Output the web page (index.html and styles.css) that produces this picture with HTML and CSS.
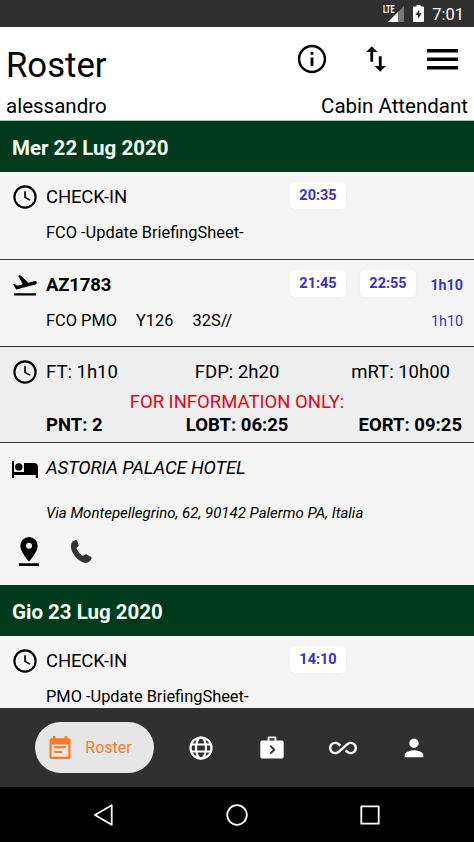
FILE: index.html
```html
<!DOCTYPE html>
<html lang="it">
<head>
	<meta charset="UTF-8">
	<title>Roster</title>
	<link rel="stylesheet" href="styles.css">
</head>
<body>
	<svg class="defs">
		<symbol id="clock" viewBox="0 0 24 24">
			<circle cx="12" cy="12" r="9.1" fill="none" stroke="currentColor" stroke-width="1.8"/>
			<path d="M12 7v5.3l4.3 2.4" fill="none" stroke="currentColor" stroke-width="1.4"/>
		</symbol>
	</svg>
	<div class="status">
		<svg class="signal" width="22" height="20" viewBox="0 0 22 20">
			<path d="M21 3v16H5z" fill="#777"/>
			<path d="M15 9v10H5z" fill="#fff"/>
			<text class="lte" x="0" y="10" textLength="11.500" lengthAdjust="spacingAndGlyphs">LTE</text>
		</svg>
		<svg class="battery" width="11" height="17" viewBox="0 0 11 17">
			<path d="M3.5 0h4v1.6H10q1 0 1 1V16q0 1-1 1H1q-1 0-1-1V2.600q0-1 1-1h2.500z" fill="#fff"/>
			<path d="M6.300 4.500L2.300 10h2.600v4l4-5.700H6.300z" fill="#303030"/>
		</svg>
		<span class="time">7:01</span>
	</div>
	<div class="header">
		<div class="top">
			<h1>Roster</h1>
			<svg class="info" width="34" height="34" viewBox="0 0 24 24"><path d="M11 7h2v2h-2zm0 4h2v6h-2zm1-9C6.480 2 2 6.480 2 12s4.480 10 10 10 10-4.480 10-10S17.520 2 12 2zm0 18.300c-4.580 0-8.300-3.720-8.300-8.300S7.420 3.700 12 3.700s8.300 3.720 8.300 8.300-3.720 8.300-8.300 8.300z"/></svg>
			<svg class="sort" width="34" height="34" viewBox="0 0 24 24"><path d="M16 17.010V10h-2v7.010h-3L15 21l4-3.990h-3zM9 3L5 6.990h3V14h2V6.990h3L9 3z"/></svg>
			<svg class="menu" width="31" height="21" viewBox="0 0 31 21"><path d="M0 0h31v3.400H0zM0 8.500h31v3.400H0zM0 17h31v3.400H0z"/></svg>
		</div>
		<div class="user">
			<span class="name">alessandro</span>
			<span class="role">Cabin Attendant</span>
		</div>
	</div>
	<div class="list">
		<h2 class="day">Mer 22 Lug 2020</h2>
		<div class="row first">
			<div class="line">
				<svg class="icon"><use href="#clock"/></svg>
				<span class="title">CHECK-IN</span>
				<span class="pill">20:35</span>
			</div>
			<div class="sub">FCO -Update BriefingSheet-</div>
		</div>
		<div class="row flight">
			<div class="line">
				<svg class="icon" viewBox="0 0 24 24"><path d="M2.500 19h19v2h-19zm19.570-9.360c-.21-.8-1.040-1.280-1.840-1.060L14.920 10l-6.900-6.430-1.930.51 4.140 7.170-4.970 1.330-1.970-1.540-1.450.39 2.590 4.490c5.890-1.570 10.680-2.860 16.570-4.430.81-.23 1.280-1.050 1.070-1.850z"/></svg>
				<span class="title bold">AZ1783</span>
				<span class="pill">21:45</span>
				<span class="pill">22:55</span>
				<span class="dur bold">1h10</span>
			</div>
			<div class="sub">
				<span class="route">FCO PMO</span>
				<span class="code">Y126</span>
				<span class="plane">32S//</span>
				<span class="dur low">1h10</span>
			</div>
		</div>
		<div class="row summary">
			<div class="line">
				<svg class="icon"><use href="#clock"/></svg>
				<div class="cols">
					<span>FT: 1h10</span>
					<span class="fdp">FDP: 2h20</span>
					<span class="mrt">mRT: 10h00</span>
				</div>
			</div>
			<div class="notice">FOR INFORMATION ONLY:</div>
			<div class="cols bold">
				<span>PNT: 2</span>
				<span class="lobt">LOBT: 06:25</span>
				<span>EORT: 09:25</span>
			</div>
		</div>
		<div class="row hotel">
			<div class="line">
				<svg class="icon bed" viewBox="0 0 26 18"><path d="M0 0h2v11h10V2h10q4 0 4 4v11h-2.200v-3H2v3H0z"/><circle cx="6.800" cy="6" r="3.700"/></svg>
				<span class="title">ASTORIA PALACE HOTEL</span>
			</div>
			<div class="address">Via Montepellegrino, 62, 90142 Palermo PA, Italia</div>
			<div class="actions">
				<svg width="20" height="29" viewBox="0 0 20 29"><path fill-rule="evenodd" d="M10 0a8.700 8.700 0 0 0-8.700 8.700C1.300 15 10 24.500 10 24.500S18.700 15 18.700 8.700A8.700 8.700 0 0 0 10 0zm0 5.700a3 3 0 1 1 0 6 3 3 0 0 1 0-6zM0 26.200h20V29H0z"/></svg>
				<svg class="phone" width="22" height="24" viewBox="0 0 22 24"><path d="M3 1.200L5.600.1q1-.3 1.500.7l1.600 4.100q.3.900-.5 1.500L6.300 8.100q2 5 6.300 8l2.700-1.600q.7-.6 1.500-.1l4.300 2.700q.9.700.3 1.700-1.800 3.800-5.600 4.100c-3.500.1-7.900-3-11.100-7.100C.9 11.200-.7 4.200 3 1.200z"/></svg>
			</div>
		</div>
		<h2 class="day">Gio 23 Lug 2020</h2>
		<div class="row last">
			<div class="line">
				<svg class="icon"><use href="#clock"/></svg>
				<span class="title">CHECK-IN</span>
				<span class="pill">14:10</span>
			</div>
			<div class="sub">PMO -Update BriefingSheet-</div>
		</div>
	</div>
	<div class="tabs">
		<div class="tab on">
			<svg width="22" height="24" viewBox="0 0 22 24"><path fill-rule="evenodd" d="M4 0h2.400v2.300h9.200V0H18v2.300h1.700q1.800 0 1.800 1.800v17q0 1.900-1.800 1.900H2.300Q.5 23 .5 21.100v-17q0-1.800 1.800-1.800H4zM2.700 8.500v12.300h16.600V8.500zM5.200 10.300h11.600v2H5.200zM5.200 15h8v2h-8z"/></svg>
			<span>Roster</span>
		</div>
		<div class="tab">
			<svg width="24" height="24" viewBox="0 0 24 24" fill="none" stroke="#fff" stroke-width="2.200"><circle cx="12" cy="12" r="10.500"/><ellipse cx="12" cy="12" rx="5" ry="10.500"/><path d="M2.500 8.500h19M2.500 15.500h19"/></svg>
		</div>
		<div class="tab">
			<svg width="24" height="23" viewBox="0 0 24 23"><path fill-rule="evenodd" d="M7.500 4.500V2.200Q7.500.5 9 .5h6q1.500 0 1.500 1.700v2.300H22q1.700 0 1.700 1.700v14.500q0 1.700-1.700 1.700H2Q.3 22.400.3 20.700V6.200Q.3 4.500 2 4.500zm2-2.200v2.200h5V2.300z"/><path d="M10.200 9.700l4 4-4 4" fill="none" stroke="#303030" stroke-width="1.900"/></svg>
		</div>
		<div class="tab">
			<svg width="28" height="28" viewBox="0 0 24 24"><path d="M18.600 6.620c-1.440 0-2.800.56-3.770 1.530L7.800 14.390c-.64.640-1.490.990-2.400.990-1.870 0-3.390-1.510-3.390-3.380S3.530 8.620 5.400 8.620c.91 0 1.760.35 2.440 1.030l1.130 1 1.510-1.340L9.220 8.200C8.200 7.180 6.840 6.620 5.400 6.620 2.420 6.620 0 9.040 0 12s2.420 5.380 5.400 5.380c1.440 0 2.800-.56 3.770-1.530l7.030-6.240c.64-.64 1.490-.99 2.400-.99 1.870 0 3.390 1.510 3.390 3.380s-1.520 3.380-3.390 3.380c-.9 0-1.760-.35-2.440-1.030l-1.140-1.010-1.510 1.340 1.270 1.120c1.020 1.010 2.370 1.570 3.820 1.570 2.980 0 5.400-2.410 5.400-5.380s-2.420-5.370-5.400-5.370z"/></svg>
		</div>
		<div class="tab">
			<svg width="28" height="28" viewBox="0 0 24 24"><path d="M12 12c2.210 0 4-1.790 4-4s-1.790-4-4-4-4 1.790-4 4 1.790 4 4 4zm0 2c-2.670 0-8 1.340-8 4v2h16v-2c0-2.660-5.330-4-8-4z"/></svg>
		</div>
	</div>
	<div class="keys">
		<svg width="22" height="22" viewBox="0 0 22 22"><path d="M18.700 1.200v19.600L2 11z"/></svg>
		<svg width="22" height="22" viewBox="0 0 22 22"><circle cx="11" cy="11" r="9.800"/></svg>
		<svg width="22" height="22" viewBox="0 0 22 22"><path d="M2.300 2.300h17.400v17.400H2.300z"/></svg>
	</div>
</body>
</html>
```

FILE: styles.css
```css
*{
	margin: 0;
	padding: 0;
	box-sizing: border-box;
}
body {
	width: 474px;
	height: 842px;
	overflow: hidden;
	font-family: Roboto, sans-serif;
	color: #000;
	background: #fff;
}
svg {
	display: block;
	flex: none;
}
span {
	white-space: nowrap;
}
.defs {
	display: none;
}
.bold {
	font-weight: bold;
}
.status {
	height: 27px;
	background: #303030;
	display: flex;
	align-items: center;
	justify-content: flex-end;
	padding: 2px 10px 0 0;
	color: #fff;
}
.signal {
	margin: -4px 8px 0 0;
}
.lte {
	font-size: 10px;
	font-weight: bold;
	fill: #fff;
}
.battery {
	margin: -2px 8px 0 0;
}
.time {
	font-size: 16.5px;
}
.header {
	height: 94px;
	border-bottom: 1px solid #b5c3b5;
}
.top {
	height: 64px;
	display: flex;
	align-items: center;
	padding: 0 16px 0 6px;
}
h1 {
	font-size: 34.700px;
	font-weight: normal;
	line-height: 40px;
	margin: 11px auto 0 0;
}
.sort {
	margin: 0 34px 0 30px;
}
.user {
	display: flex;
	justify-content: space-between;
	padding: 3px 6px 0;
	font-size: 20.500px;
	line-height: 25px;
}
.list {
	height: 587px;
	overflow: hidden;
}
.day {
	height: 51px;
	line-height: 54px;
	padding-left: 12px;
	background: #003a1e;
	color: #effff2;
	font-size: 20.500px;
}
.row {
	height: 87px;
	padding: 10px 12px 0 11px;
	background: #f5f5f5;
	border-bottom: 1px solid #333;
	font-size: 18.500px;
}
.row.first {
	height: 88px;
}
.line {
	height: 30px;
	display: flex;
	align-items: center;
}
.icon {
	width: 28px;
	height: 28px;
	margin-right: 7px;
}
.line .title {
	width: 244px;
	letter-spacing: -0.150px;
}
.hotel .title {
	font-style: italic;
}
.pill {
	width: 56px;
	height: 27px;
	line-height: 28px;
	margin: -3px 14px 0 0;
	border-radius: 5px;
	background: #fff;
	box-shadow: 0 0 2px #e4e4e4;
	text-align: center;
	font-size: 14.500px;
	font-weight: bold;
	color: #3a30cf;
}
.flight {
	padding-right: 11px;
}
.dur {
	margin-left: auto;
	font-size: 14.300px;
	color: #3a30cf;
}
.low {
	padding-top: 2px;
}
.sub {
	display: flex;
	align-items: center;
	height: 40px;
	padding-left: 35px;
	font-size: 16.400px;
}
.code {
	margin: 0 19px;
}
.summary {
	height: 96px;
	background: #eee;
	font-size: 18.500px;
}
.cols {
	flex: 1;
	display: flex;
	justify-content: space-between;
	line-height: 24px;
}
.fdp {
	padding-left: 5px;
}
.lobt {
	padding-left: 13px;
}
.mrt {
	margin-right: 12px;
}
.notice {
	padding: 2px 0 0 1px;
	line-height: 26px;
	text-align: center;
	color: #e30613;
}
.summary > .cols {
	line-height: 21px;
	padding-left: 35px;
}
.hotel {
	height: 142px;
	border: 0;
}
.bed {
	width: 26px;
	height: 18px;
	margin: 3px 8px 0 1px;
}
.address {
	padding: 20px 0 0 35px;
	font-size: 15px;
	font-style: italic;
	line-height: 20px;
}
.actions {
	display: flex;
	align-items: center;
	padding: 14px 0 0 8px;
}
.phone {
	margin-left: 31px;
	fill: #333;
}
.last {
	border: 0;
}
.tabs {
	height: 79px;
	display: flex;
	align-items: center;
	padding: 0 25px 0 35px;
	background: #303030;
	fill: #fff;
}
.tab {
	width: 71px;
	display: flex;
	justify-content: center;
}
.on {
	width: 119px;
	height: 51px;
	margin-right: 11px;
	padding-right: 8px;
	align-items: center;
	gap: 14px;
	border-radius: 26px;
	background: #e6e6e6;
	fill: #fb7a25;
	color: #fb7a25;
	font-size: 16px;
}
.keys {
	height: 55px;
	display: flex;
	align-items: center;
	justify-content: center;
	gap: 111px;
	background: #000;
	fill: none;
	stroke: #fff;
	stroke-width: 1.800;
	stroke-linejoin: round;
}
```
